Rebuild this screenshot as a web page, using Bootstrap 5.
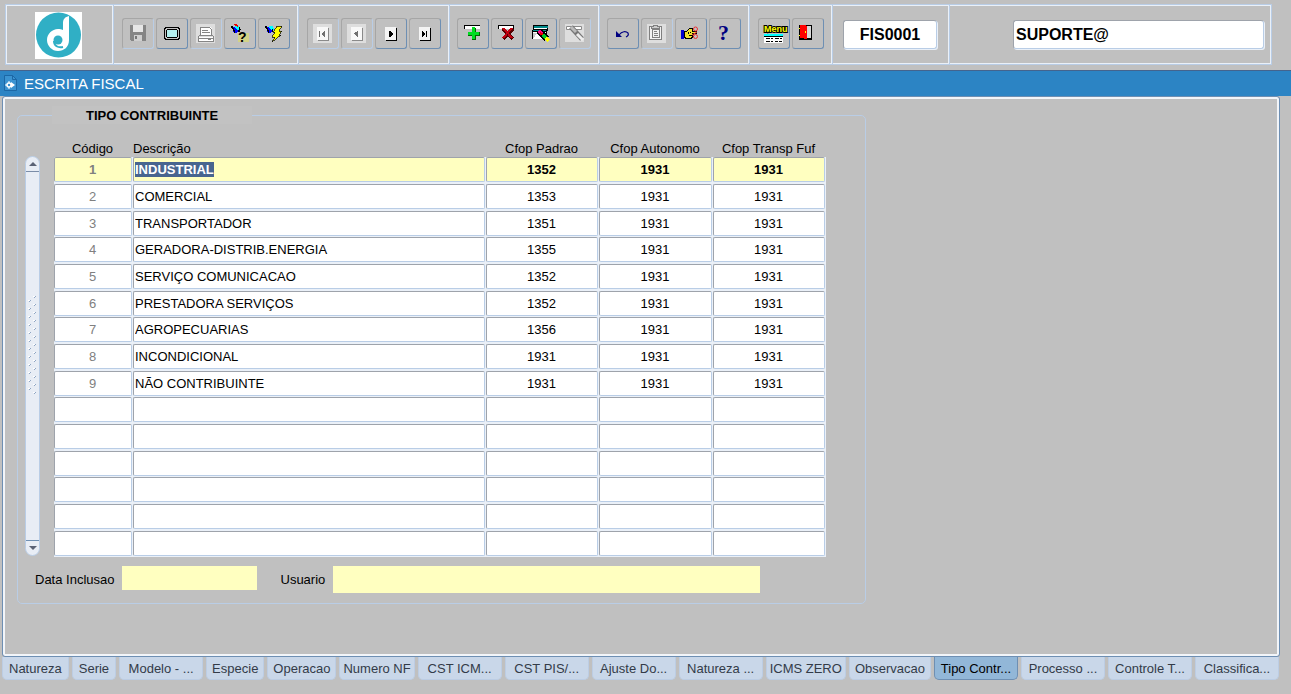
<!DOCTYPE html>
<html lang="pt-BR">
<head>
<meta charset="utf-8">
<meta name="viewport" content="width=device-width, initial-scale=1">
<title>Escrita Fiscal</title>
<link href="https://cdn.jsdelivr.net/npm/bootstrap@5.3.0/dist/css/bootstrap.min.css" rel="stylesheet">
<style>
  :root { --face:#c0c0c0; --light:#eaf0f8; --line:#b9cde6; --edge:#6e8fb3; --shade:#9ea3ab; --cream:#ffffc0; }
  body { background:var(--face); color:#000; font-family:"Liberation Sans",Arial,sans-serif; font-size:13px; line-height:16px; }
  svg { display:block; flex:none; }
  input { font-family:inherit; color:#000; min-width:0; }
  input:focus { outline:0; }
  input::selection { background:#48658f; color:#fff; }

  /* toolbar */
  .toolbar { margin:4px 19px 5px 5px; height:61px; border:1px solid var(--line); box-shadow:inset 1px 1px var(--light), inset -1px -1px var(--light); }
  .tool-group { border-right:1px solid var(--line); box-shadow:inset -1px 0 var(--light); padding:0 8px 2px 8px; gap:2px; }
  .tool-tight { padding:0 8px 2px 7px; }
  .tool-wide { padding:0 12px 0 10px; }
  .brand-box { width:108px; padding:2px 10px 0 8px; }
  .tool { width:32px; height:31px; padding:0; background:transparent; border:1px solid; border-color:#a6a6a6 var(--edge) var(--edge) #a6a6a6; border-radius:3px; }
  .tool:disabled { border-color:#a6a6a6 var(--line) var(--line) #a6a6a6; }
  .tool svg { overflow:visible; }
  .box { height:29px; border:1px solid; border-color:var(--shade) var(--line) var(--line) var(--shade); box-shadow:1px 1px var(--light); border-radius:3px; background:#fff; font-size:16px; font-weight:700; padding:0 2px; }
  .box-code { width:94px; }
  .box-user { width:251px; margin-right:7px; }

  /* window */
  .title-strip { height:26px; background:#2c84c4; border-top:1px solid #44648e; color:#fff; font-size:15px; padding-left:4px; gap:7px; }
  .sheet { margin:0 11px 0 2px; min-height:561px; border:1px solid var(--edge); border-radius:3px; box-shadow:inset 0 0 0 2px #f2f5f9; padding:9px 14px; }
  .panel { max-width:849px; border:1px solid var(--line); border-radius:5px; padding:0 0 10px 7px; }
  .panel legend { float:none; width:200px; height:18px; margin:0 0 16px 27px; padding-left:34px; background:#c2c2c2; font-size:13px; line-height:20px; font-weight:700; }

  /* record grid */
  .grid-area { gap:14px; padding-right:39px; }
  .scroller { width:15px; height:400px; margin-top:16px; background:#e8edf5; border:1px solid var(--line); border-radius:8px; flex:none; }
  .scroller button { width:13px; height:15px; padding:0; border:0; background:transparent; }
  .scroller .to-top { border-bottom:1px solid #7b8da8; }
  .scroller .to-end { border-top:1px solid var(--edge); }
  .grip { margin-bottom:22px; }
  .records { width:100%; height:417px; table-layout:fixed; border-collapse:separate; border-spacing:0; }
  .records th { height:17px; padding:0 2px 0 0; font-weight:400; text-align:center; white-space:nowrap; }
  .records th.desc { text-align:left; }
  .records td { padding:0 1px 1px 0; background:var(--light); }
  .records td input { display:block; width:100%; height:25px; border:1px solid; border-color:var(--shade) var(--line) var(--line) var(--shade); border-radius:2px; padding:0 2px 0 1px; text-align:center; background:#fff; }
  .records td.desc input { text-align:left; }
  .records td:first-child input { color:#808080; }
  .records tr.current input { background:var(--cream); font-weight:700; }
  .c-code { width:79px; } .c-cfop { width:113px; } .c-mid { width:114px; }
  .info { margin-top:9px; padding-left:10px; }
  .info label { padding-top:6px; }
  .info input { border:0; background:var(--cream); padding:0 3px; }
  .info-date { width:135px; height:24px; margin:0 24px 0 7px; }
  .info-user { width:427px; height:27px; margin-left:8px; }

  /* bottom tabs */
  .pages { margin:0 11px 0 2px; gap:3px; }
  .pages button { height:23px; padding:0 5px; border:1px solid #bccde4; border-top:0; border-radius:0 0 5px 5px; background:#c9d7e9; color:#333b48; line-height:23px; white-space:nowrap; }
  .pages .roomy { padding:0 6px; }
  .pages .tight { padding:0 3px; }
  .pages .cut { width:84px; }
  .pages .active { background:#92b7d8; color:#000; border-color:var(--edge); }
</style>
</head>
<body>
<header class="toolbar d-flex">
  <div class="tool-group brand-box d-flex align-items-center justify-content-center">
    <svg width="47" height="47" viewBox="0 0 47 47" role="img" aria-label="Logo"><path fill="#fff" d="M0 0h47v47H0z"/><circle cx="23.500" cy="23" r="22.500" fill="#30afc5"/><path fill="#fff" d="M34 4v24c0 7-5 11-11 11s-11-5-11-11 5-11 11-11c2 0 3 0 5 1v-7c0-4 2-6 6-7z"/><circle cx="23" cy="28" r="4.500" fill="#30afc5"/><path fill="none" stroke="#30afc5" stroke-width="2" d="M19 29c0 5 4 7 9 6"/></svg>
  </div>

  <div class="tool-group d-flex align-items-center">
    <button class="tool d-flex align-items-center justify-content-center" disabled aria-label="Salvar"><svg width="20" height="20" shape-rendering="crispEdges"><path fill="#858585" d="M2 1h16v16H3l-1-1z"/><path fill="#e6e6e6" d="M5 1h10v7H5z"/><path fill="#cfcfcf" d="M6 11h8v6H6z"/><path fill="#777" d="M7 12h2v3H7z"/></svg></button>
    <button class="tool d-flex align-items-center justify-content-center" aria-label="Tela"><svg width="20" height="20" shape-rendering="crispEdges"><path d="M3 3h14v1h1v11h-1v1H3v-1H2V4h1z"/><path fill="#c0c0c0" d="M4 4h12v1h1v9h-1v1H4v-1H3V5h1z"/><path d="M5 5h10v1h1v7h-1v1H5v-1H4V6h1z"/><path fill="#b4f0f0" d="M5 6h10v7H5z"/></svg></button>
    <button class="tool d-flex align-items-center justify-content-center" disabled aria-label="Imprimir"><svg width="20" height="20" shape-rendering="crispEdges"><path fill="#dedede" d="M0 0h19v19H0z"/><path fill="#fff" d="M5 3h9l2 2v6H5zM3 13h14v4H3z"/><path fill="none" stroke="#858585" d="M4.500 11V3.500h9l2 2V11M6 6.500h6M6 8.500h8M3 11.500h14M2.500 12v5M17.500 12v5M2 17.500h16M3 14.500h14M12 15.500h3"/></svg></button>
    <button class="tool d-flex align-items-center justify-content-center" aria-label="Entrar consulta"><svg width="20" height="20" shape-rendering="crispEdges"><path fill="#ff0" fill-opacity=".3" d="M8 9h11v9H8z"/><path fill="#0ff" d="M5 2h4l2 4-2 1-4-3z"/><path fill="#00f" d="M2 3h2l4 4-1 2H4z"/><path d="M1 2h2v2h1v2h1v3H4V7H3V5H2V4H1zM8 6h2v2H8zM9 3h1v2h1v1H9z"/><path fill="#e00" d="M4 0h3v1h1v2H7V2H5V1H4z"/><text x="8" y="18" font-size="14" font-weight="700">?</text></svg></button>
    <button class="tool d-flex align-items-center justify-content-center" aria-label="Executar consulta"><svg width="20" height="20" shape-rendering="crispEdges"><path fill="#0ff" d="M5 2h4l1 4-2 1-4-3z"/><path fill="#00f" d="M2 3h2l4 4-1 2H4z"/><path d="M1 2h2v2h1v2h1v3H4V7H3V5H2V4H1zM8 5h1v3H8z"/><path fill="#ff0" stroke="#000" stroke-width=".7" d="M13 2h5l-3 5h3l-3 4h2l-9 7 3-5H8l3-5H9z"/></svg></button>
  </div>

  <div class="tool-group d-flex align-items-center">
    <button class="tool d-flex align-items-center justify-content-center" disabled aria-label="Primeiro"><svg width="20" height="20" shape-rendering="crispEdges"><path fill="#dedede" d="M0 0h19v19H0z"/><path fill="#8a8a8a" d="M5 4h11v13H5z"/><path fill="#f8f8f8" d="M4 3h11v13H4z"/><path fill="#707070" d="M6 7h1v6H6zM12 7v6h-1v-1h-1v-1H9v-1H8h1V9h1V8h1V7z"/></svg></button>
    <button class="tool d-flex align-items-center justify-content-center" disabled aria-label="Anterior"><svg width="20" height="20" shape-rendering="crispEdges"><path fill="#dedede" d="M0 0h19v19H0z"/><path fill="#8a8a8a" d="M5 4h11v13H5z"/><path fill="#f8f8f8" d="M4 3h11v13H4z"/><path fill="#707070" d="M11 7v6h-1v-1H9v-1H8v-1H7V9h1V8h2V7z"/></svg></button>
    <button class="tool d-flex align-items-center justify-content-center" aria-label="Próximo"><svg width="20" height="20" shape-rendering="crispEdges"><path d="M5 4h11v13H5z"/><path fill="#f4f4f4" d="M4 3h11v13H4z"/><path d="M8 7h2v1h1v1h1v2h-1v1h-1v1H8z"/></svg></button>
    <button class="tool d-flex align-items-center justify-content-center" aria-label="Último"><svg width="20" height="20" shape-rendering="crispEdges"><path d="M5 4h11v13H5z"/><path fill="#f4f4f4" d="M4 3h11v13H4z"/><path d="M7 7h1v1h1v1h1v2H9v1H8v1H7zM11 7h1v6h-1z"/></svg></button>
  </div>

  <div class="tool-group tool-tight d-flex align-items-center">
    <button class="tool d-flex align-items-center justify-content-center" aria-label="Inserir"><svg width="20" height="20" shape-rendering="crispEdges"><path d="M1 1h16v4H1z"/><path fill="#fff" d="M2 2h15v3H2z"/><path fill="#060" d="M9 4h4v4h4v4h-4v4H9v-4H5V8h4z"/><path fill="#0d2" d="M9 3h3v5h4v3h-4v4H9v-4H5V8h4z"/></svg></button>
    <button class="tool d-flex align-items-center justify-content-center" aria-label="Excluir"><svg width="20" height="20" shape-rendering="crispEdges"><path d="M1 1h16v4H1z"/><path fill="#fff" d="M2 2h14v3H2z"/><path stroke="#500" stroke-width="4" d="m6 5 10 10M16 5 6 15"/><path stroke="#c00010" stroke-width="2" d="m6 4 9 10M15 4 6 14"/></svg></button>
    <button class="tool d-flex align-items-center justify-content-center" aria-label="Duplicar"><svg width="20" height="20" shape-rendering="crispEdges"><path d="M2 1h15v6H2zM1 6h15v9H1z"/><path fill="#088" d="M3 2h14v2H3zM2 6h13v1H2z"/><path fill="#fff" d="M3 4h13v1H3zM2 8h13v7H2z"/><path fill="#c8c8c8" d="M2 9h4l-4 6z"/><g fill="none" stroke-width="3"><path stroke="#000" stroke-width="6" d="m8 7 8 8"/><path stroke="#f08" stroke-width="4" d="m8 7 3 3"/><path stroke="#e00" stroke-width="2" d="m9 9 3 2"/><path stroke="#0c2" stroke-width="4" d="m12 11 3 3"/><path stroke="#ff0" d="m15 14 3 3"/></g></svg></button>
    <button class="tool d-flex align-items-center justify-content-center" disabled aria-label="Limpar"><svg width="20" height="20"><path fill="#dedede" d="M0 0h19v18H0z"/><path fill="#fff" stroke="#8a8a8a" d="M1.500 2.500h15v3h-15z"/><path stroke="#777" stroke-width="5" d="m6 3 11 12"/><path stroke="#bbb" stroke-width="3" d="m6 3 5 5"/><path stroke="#eee" stroke-width="3" d="m12 10 6 6"/></svg></button>
  </div>

  <div class="tool-group tool-tight d-flex align-items-center">
    <button class="tool d-flex align-items-center justify-content-center" aria-label="Desfazer"><svg width="20" height="20"><path fill="none" stroke="#000080" stroke-width="1.200" d="M6 11c3-4 7-4 9-2 1 2 0 3-2 4"/><path fill="#000080" d="M3 7v6h6z"/></svg></button>
    <button class="tool d-flex align-items-center justify-content-center" disabled aria-label="Colar"><svg width="20" height="20" shape-rendering="crispEdges"><path fill="#dedede" d="M0 0h19v19H0z"/><path fill="#f2f2f2" stroke="#808080" d="M2.500 2.500h12v13h-12zM5.500 5.500h7v8h-7z"/><path fill="#ccc" stroke="#808080" d="M4.500 4.500v-2h2v-1h4v1h2v2z"/><path stroke="#808080" d="M7 7.500h3M7 9.500h4M7 11.500h4"/></svg></button>
    <button class="tool d-flex align-items-center justify-content-center" aria-label="Lista"><svg width="20" height="20" shape-rendering="crispEdges"><path fill="#0000d0" d="M0 6h3v9H0z"/><path fill="#f0e030" stroke="#000" d="M3.500 7.500h2l3-3h3v3h4v2h-4l1 1-1 1 1 1-2 1v1h-5l-2-1z"/><path stroke="#000" d="M7 8v2M9 8v1M8 11h3"/><g fill="none" stroke="#f03030" shape-rendering="auto"><circle cx="14.500" cy="5" r="2"/><circle cx="14.500" cy="12.500" r="2"/><path d="m11 11 5-3"/></g></svg></button>
    <button class="tool d-flex align-items-center justify-content-center" aria-label="Ajuda"><svg width="20" height="20"><text x="3" y="16" fill="#000080" font-family="Liberation Serif, serif" font-size="22" font-weight="700">?</text></svg></button>
  </div>

  <div class="tool-group d-flex align-items-center">
    <button class="tool d-flex align-items-center justify-content-center" aria-label="Menu"><svg width="20" height="20"><text x="0" y="8" fill="#ff0" stroke="#000" stroke-width="2" paint-order="stroke" font-family="Liberation Sans Narrow, Liberation Sans, sans-serif" font-size="9" font-weight="700">Menu</text><path d="M0 10h19v3H0z"/><path fill="#0ff" d="M0 10h19v2H0z"/><path fill="#fff" d="M0 13h19v6H0z"/><path stroke="#000" d="M2 14.500h4M7 14.500h2M11 14.500h4M16 14.500h2M2 17.500h4M7 17.500h2M11 17.500h3M15 17.500h3"/></svg></button>
    <button class="tool d-flex align-items-center justify-content-center" aria-label="Sair"><svg width="20" height="20" shape-rendering="crispEdges"><path d="M1 1h13v15H1z"/><path fill="#d8d8d8" d="M9 2h4v12H9z"/><path fill="#f00" d="M2 1h6l1 2v12H6v-1H2z"/><path fill="#ff0" d="M7 7h1v2H7z"/><path fill="#ff0" d="M1 4h1v1H1zM1 11h1v1H1z"/></svg></button>
  </div>

  <div class="tool-group tool-wide d-flex align-items-center">
    <input class="box box-code text-center" type="text" value="FIS0001" aria-label="Programa" readonly>
  </div>
  <div class="d-flex flex-grow-1 align-items-center justify-content-end">
    <input class="box box-user" type="text" value="SUPORTE@" aria-label="Usuário conectado" readonly>
  </div>
</header>

<main>
  <div class="title-strip d-flex align-items-center">
    <svg width="13" height="17" viewBox="0 0 13 17"><path fill="#3b93d1" stroke="#1c67a5" d="M.500.500h8l4 4v11H.500z"/><path fill="none" stroke="#1c67a5" d="M8.500.500v4h4"/><circle cx="5" cy="10" r="2" fill="none" stroke="#fff" stroke-width="1.500"/><path fill="#fff" d="m7 7 4 3-4 3zM4.500 6h1v2h-1zM4.500 12h1v2h-1zM1 9.500h2v1H1z"/></svg>
    <span>ESCRITA FISCAL</span>
  </div>

  <div class="sheet">
    <fieldset class="panel">
      <legend>TIPO CONTRIBUINTE</legend>
      <div class="grid-area d-flex">
        <div class="scroller d-flex flex-column align-items-center justify-content-between">
          <button class="to-top d-flex align-items-center justify-content-center" aria-label="Subir"><svg width="8" height="4"><path fill="#5a6275" d="m0 4 4-4 4 4z"/></svg></button>
          <svg class="grip" width="9" height="100"><defs><pattern id="grip" width="9" height="8" patternUnits="userSpaceOnUse"><path stroke="#fff" d="M5 1.500h2M0 5.500h2"/><path stroke="#8fa6c4" d="m6 3 2-2M1 7l2-2"/></pattern></defs><path fill="url(#grip)" d="M0 0h9v100H0z"/></svg>
          <button class="to-end d-flex align-items-center justify-content-center" aria-label="Descer"><svg width="8" height="4"><path fill="#5a6275" d="m0 0 4 4 4-4z"/></svg></button>
        </div>
        <table class="records">
          <colgroup><col class="c-code"><col><col class="c-cfop"><col class="c-mid"><col class="c-cfop"></colgroup>
          <thead><tr><th scope="col">Código</th><th scope="col" class="desc">Descrição</th><th scope="col">Cfop Padrao</th><th scope="col">Cfop Autonomo</th><th scope="col">Cfop Transp Fuf</th></tr></thead>
          <tbody id="rows"></tbody>
        </table>
      </div>
      <div class="info d-flex align-items-start">
        <label for="dataInclusao">Data Inclusao</label>
        <input class="info-date" id="dataInclusao" type="text" readonly>
        <label for="usuario">Usuario</label>
        <input class="info-user" id="usuario" type="text" readonly>
      </div>
    </fieldset>
  </div>

  <nav class="pages d-flex" aria-label="Cadastros">
    <button class="roomy">Natureza</button><button class="roomy">Serie</button><button class="cut">Modelo - ...</button><button>Especie</button><button>Operacao</button><button class="tight">Numero NF</button><button class="cut">CST ICM...</button><button class="cut">CST PIS/...</button><button class="cut">Ajuste Do...</button><button class="cut">Natureza ...</button><button class="tight">ICMS ZERO</button><button>Observacao</button><button class="cut active" aria-current="page">Tipo Contr...</button><button class="cut">Processo ...</button><button class="cut">Controle T...</button><button class="cut">Classifica...</button>
  </nav>
</main>

<script src="https://cdn.jsdelivr.net/npm/bootstrap@5.3.0/dist/js/bootstrap.bundle.min.js"></script>
<script>
  const records = [
    ['1', 'INDUSTRIAL', '1352', '1931', '1931'],
    ['2', 'COMERCIAL', '1353', '1931', '1931'],
    ['3', 'TRANSPORTADOR', '1351', '1931', '1931'],
    ['4', 'GERADORA-DISTRIB.ENERGIA', '1355', '1931', '1931'],
    ['5', 'SERVIÇO COMUNICACAO', '1352', '1931', '1931'],
    ['6', 'PRESTADORA SERVIÇOS', '1352', '1931', '1931'],
    ['7', 'AGROPECUARIAS', '1356', '1931', '1931'],
    ['8', 'INCONDICIONAL', '1931', '1931', '1931'],
    ['9', 'NÃO CONTRIBUINTE', '1931', '1931', '1931']
  ];
  const fields = ['Código', 'Descrição', 'Cfop Padrao', 'Cfop Autonomo', 'Cfop Transp Fuf'];
  const body = document.getElementById('rows');
  for (let r = 0; r < 15; r++) {
    const tr = body.insertRow();
    if (r === 0) tr.className = 'current';
    fields.forEach((name, c) => {
      const td = tr.insertCell();
      if (c === 1) td.className = 'desc';
      const input = document.createElement('input');
      input.type = 'text';
      input.value = records[r] ? records[r][c] : '';
      input.readOnly = c === 0;
      input.setAttribute('aria-label', name + ' ' + (r + 1));
      td.append(input);
    });
  }
  const first = body.querySelector('.desc input');
  first.focus();
  first.select();
</script>
</body>
</html>
